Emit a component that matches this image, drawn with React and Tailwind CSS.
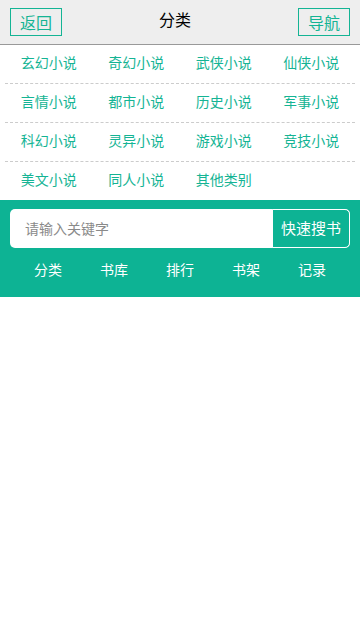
const cats = [
  '玄幻小说', '奇幻小说', '武侠小说', '仙侠小说',
  '言情小说', '都市小说', '历史小说', '军事小说',
  '科幻小说', '灵异小说', '游戏小说', '竞技小说',
  '美文小说', '同人小说', '其他类别',
];

const rows = [];
for (let i = 0; i < cats.length; i += 4) rows.push(cats.slice(i, i + 4));

const navs = ['分类', '书库', '排行', '书架', '记录'];

export default function App() {
  return (
    <div className="w-[360px] min-h-[640px] bg-white" style={{ fontFamily: '"Noto Sans CJK SC", "Liberation Sans", sans-serif' }}>
      {/* header */}
      <div className="h-[45px] bg-[#eeeeee] border-b border-[#999999] flex items-center justify-between px-[10px]">
        <button className="w-[52px] h-[28px] -mt-[1px] border border-[#14b494] text-[#14b494] text-[16px] leading-none flex items-center justify-center">
          返回
        </button>
        <div className="text-[16px] text-black -mt-[6px] -ml-[10px]">分类</div>
        <button className="w-[52px] h-[28px] -mt-[1px] border border-[#14b494] text-[#14b494] text-[16px] leading-none flex items-center justify-center">
          导航
        </button>
      </div>

      {/* categories */}
      <div className="px-[5px]">
        {rows.map((row, i) => (
          <div
            key={i}
            className={`grid grid-cols-4 items-center pb-[3px] ${i < rows.length - 1 ? 'h-[39px] border-b border-dashed border-[#cccccc]' : 'h-[38px]'}`}
          >
            {row.map((c) => (
              <div key={c} className="text-center text-[14px] text-[#14b494]">
                {c}
              </div>
            ))}
          </div>
        ))}
      </div>

      {/* search */}
      <div className="bg-[#0db394] pt-[9px] pb-[9px] px-[10px]">
        <div className="flex h-[39px] bg-white rounded-[5px]">
          <div className="flex-1 flex items-center pl-[15px] text-[14px] text-[#8a8a8a]">请输入关键字</div>
          <button className="w-[78px] h-full bg-[#0db394] border border-white rounded-r-[5px] text-white text-[15px]">
            快速搜书
          </button>
        </div>
        <div className="grid grid-cols-5 px-[5px] pt-[3px] h-[40px] items-center">
          {navs.map((n) => (
            <div key={n} className="text-center text-white text-[14px]">
              {n}
            </div>
          ))}
        </div>
      </div>
    </div>
  );
}
